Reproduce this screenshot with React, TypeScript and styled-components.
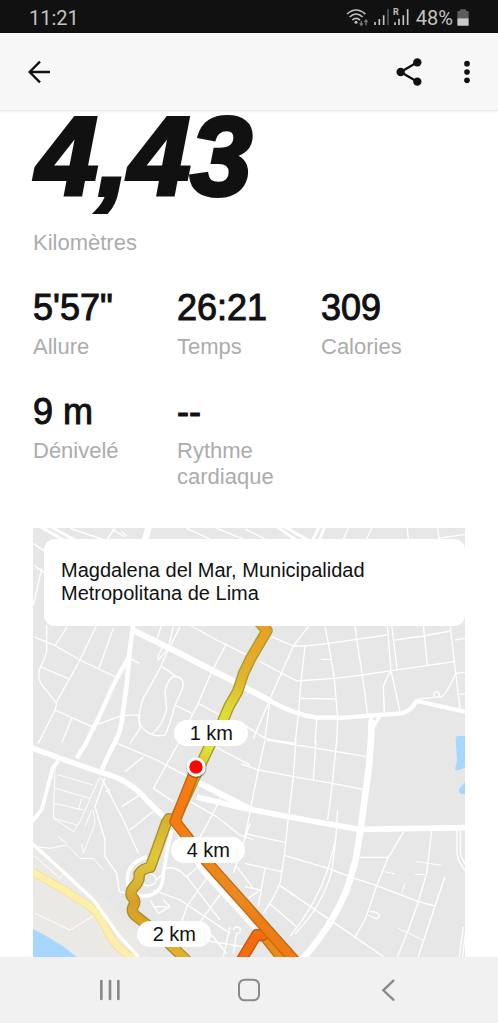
import React from "react";
import styled, { createGlobalStyle } from "styled-components";

const INK = "#111111";
const SANS = `"Liberation Sans", Arial, sans-serif`;

const GlobalStyle = createGlobalStyle`
  * { box-sizing: border-box; }
  body { margin: 0; background: #ffffff; color: ${INK}; font-family: ${SANS}; }
  button { border: 0; padding: 0; background: none; color: inherit; font: inherit; cursor: pointer; }
`;

const Screen = styled.div`
  min-height: 100vh;
  display: flex;
  flex-direction: column;
`;

const StatusBar = styled.div`
  display: flex;
  align-items: center;
  justify-content: space-between;
  height: 33px;
  padding: 2px 29px 0;
  background: #111111;
  color: #c2c2c2;
  font: 20px/30px Roboto, sans-serif;
`;

const StatusIcons = styled.div`
  display: flex;
  align-items: center;
  gap: 4px;
`;

const BatteryLevel = styled.span`
  margin-left: 3px;
`;

const AppBar = styled.header`
  position: sticky;
  top: 0;
  z-index: 2;
  display: flex;
  align-items: center;
  justify-content: space-between;
  height: 78px;
  padding: 0 15px;
  background: #f7f7f7;
  border-bottom: 1px solid #e9e9e9;
  box-shadow: 0 1px 2px rgba(0, 0, 0, 0.06);
`;

const Actions = styled.div`
  display: flex;
  gap: 10px;
  margin-right: -8px;
`;

const IconButton = styled.button`
  display: grid;
  place-items: center;
  width: 48px;
  height: 48px;
`;

const Content = styled.main`
  flex: 1;
  padding: 0 33px;
`;

const Distance = styled.div`
  margin-bottom: 27px;
  padding-left: 3px;
  font-size: 111px;
  font-weight: 700;
  font-style: italic;
  line-height: 92px;
  -webkit-text-stroke: 4px ${INK};
`;

const Label = styled.div`
  color: #acacac;
  font-size: 22px;
  line-height: 26px;
`;

const Stats = styled.div`
  display: grid;
  grid-template-columns: repeat(3, 1fr);
  gap: 32px 0;
  margin: 32px 0 38px;
`;

const Value = styled.div`
  margin-bottom: 6px;
  font-size: 36px;
  line-height: 40px;
  -webkit-text-stroke: 1px ${INK};
`;

const MapFrame = styled.section`
  position: relative;
  aspect-ratio: 432 / 429;
  overflow: hidden;
  background: #e7e7e7;
`;

const MapDrawing = styled.svg`
  display: block;
  width: 100%;
  height: 100%;
`;

const PlaceCard = styled.div`
  position: absolute;
  top: 11px;
  left: 11px;
  right: 0;
  padding: 20px 17px 21px;
  border-radius: 11px;
  background: #ffffff;
  font-size: 20px;
  line-height: 23px;
`;

/* Map drawing units, shared by the svg and the distance tags */
const MAP_WIDTH = 1296;
const MAP_HEIGHT = 1287;

const KmTag = styled.div<{ $x: number; $y: number }>`
  position: absolute;
  left: ${(p) => (p.$x / MAP_WIDTH) * 100}%;
  top: ${(p) => (p.$y / MAP_HEIGHT) * 100}%;
  transform: translate(-50%, -50%);
  width: 74px;
  border-radius: 13px;
  background: #ffffff;
  font-size: 20px;
  line-height: 26px;
  text-align: center;
`;

const SystemNav = styled.nav`
  position: sticky;
  bottom: 0;
  z-index: 2;
  display: grid;
  grid-template-columns: repeat(3, 1fr);
  height: 66px;
  padding: 0 40px;
  background: #f1f1f1;
`;

const NavButton = styled.button`
  display: grid;
  place-items: center;
`;

const stats = [
  { value: `5'57"`, label: "Allure" },
  { value: "26:21", label: "Temps" },
  { value: "309", label: "Calories" },
  { value: "9 m", label: "Dénivelé" },
  { value: "--", label: "Rythme cardiaque" },
];

const tags = [
  { text: "1 km", x: 535, y: 614 },
  { text: "4 km", x: 526, y: 967 },
  { text: "2 km", x: 424, y: 1218 },
];

const WifiIcon = () => (
  <svg width="24" height="19" viewBox="0 0 72 57" fill="none" stroke="#c2c2c2" strokeWidth="5" aria-hidden="true">
    <path d="M3 18Q30-6 58 18M11 27Q30 9 50 27M19 36Q30 26 42 36" />
    <circle cx="30" cy="43" r="4.5" fill="#c2c2c2" stroke="none" />
    <g stroke="#777777" strokeWidth="4">
      <path d="M46 38V51M41 46L46 52L51 46M60 52V37M55 42L60 36L65 42" />
    </g>
  </svg>
);

const SignalIcon = () => (
  <svg width="15" height="19" viewBox="0 0 45 57" stroke="#c2c2c2" strokeWidth="5" aria-hidden="true">
    <path d="M3 42V51M16 33V51M29 22V51" />
    <path d="M42 4V51" stroke="#555555" />
  </svg>
);

const RoamingIcon = () => (
  <svg width="16" height="19" viewBox="0 0 48 57" aria-hidden="true">
    <path d="M6 43V51M18 32V51M31 22V51M44 4V51" stroke="#c2c2c2" strokeWidth="5" />
    <text x="0" y="22" fill="#c2c2c2" fontFamily="Roboto, sans-serif" fontWeight="700" fontSize="27">R</text>
  </svg>
);

const BatteryIcon = () => (
  <svg width="12" height="17" viewBox="0 0 36 51" aria-hidden="true">
    <path d="M9 1H27V6H33Q35 6 35 8V28H1V8Q1 6 3 6H9Z" fill="#5c5c5c" />
    <path d="M1 28H35V48Q35 50 33 50H3Q1 50 1 48Z" fill="#c9c9c9" />
  </svg>
);

const BackIcon = () => (
  <svg width="24" height="24" viewBox="0 0 72 72" fill="none" stroke={INK} strokeWidth="7" aria-hidden="true">
    <path d="M69 36H8M39 5L8 36L39 67" />
  </svg>
);

const ShareIcon = () => (
  <svg width="28" height="28" viewBox="0 0 84 84" fill={INK} aria-hidden="true">
    <path d="M67 13L17 42L67 71" fill="none" stroke={INK} strokeWidth="7" />
    <circle cx="67" cy="13" r="12.5" />
    <circle cx="17" cy="42" r="12.5" />
    <circle cx="67" cy="71" r="12.5" />
  </svg>
);

const MoreIcon = () => (
  <svg width="6" height="24" viewBox="0 0 18 72" fill={INK} aria-hidden="true">
    <circle cx="9" cy="11" r="8.5" />
    <circle cx="9" cy="36" r="8.5" />
    <circle cx="9" cy="61" r="8.5" />
  </svg>
);

type RouteProps = { d: string; edge: string; fill: string };
const Route = ({ d, edge, fill }: RouteProps) => (
  <g fill="none" strokeLinejoin="round" strokeLinecap="round">
    <path d={d} stroke={edge} strokeWidth="34" />
    <path d={d} stroke={fill} strokeWidth="26" />
  </g>
);

const CityMap = () => (
  <MapDrawing viewBox={`0 0 ${MAP_WIDTH} ${MAP_HEIGHT}`} preserveAspectRatio="xMidYMid slice" role="img" aria-label="Parcours">
    <defs>
      <linearGradient id="north" gradientUnits="userSpaceOnUse" x1="700" y1="300" x2="500" y2="720">
        <stop offset="0" stopColor="#e9a023" />
        <stop offset="0.35" stopColor="#e2b32c" />
        <stop offset="0.6" stopColor="#dedc35" />
        <stop offset="0.85" stopColor="#dfe53a" />
        <stop offset="1" stopColor="#d8c12e" />
      </linearGradient>
      <linearGradient id="west" gradientUnits="userSpaceOnUse" x1="400" y1="880" x2="440" y2="1290">
        <stop offset="0" stopColor="#d9b030" />
        <stop offset="0.25" stopColor="#dfc838" />
        <stop offset="0.42" stopColor="#d9b634" />
        <stop offset="0.56" stopColor="#d99e28" />
        <stop offset="1" stopColor="#e0b32b" />
      </linearGradient>
      <linearGradient id="south" gradientUnits="userSpaceOnUse" x1="430" y1="880" x2="780" y2="1290">
        <stop offset="0" stopColor="#f57c12" />
        <stop offset="0.5" stopColor="#ea8b1d" />
        <stop offset="0.75" stopColor="#ee7c15" />
        <stop offset="1" stopColor="#f27911" />
      </linearGradient>
    </defs>

    {/* Coast, sea and lagoon */}
    <path d="M0 950L90 1035L230 1125L325 1230L350 1287H0Z" fill="#ebe9e6" />
    <path d="M0 1203L40 1224L90 1255L131 1287H0Z" fill="#a7d6ff" />
    <path d="M1276 624H1296V718Q1274 731 1266 725L1272 696L1268 632Q1268 624 1276 624Z" fill="#a7d6ff" />
    <path d="M1296 762V799Q1276 800 1278 784Z" fill="#a7d6ff" />

    <g fill="none" stroke="#ffffff" strokeWidth="4" strokeLinejoin="round">
      {/* North-west blocks */}
      <g transform="translate(-9 -9)">
        <path d="M10 55L45 80M10 120L45 145M35 130L10 240M120 10L215 42M255 10L232 42M245 12L285 36M275 20L290 32M470 10L540 42M560 10L640 42" />
        <path d="M10 335L75 362L150 405L255 455M50 300V380Q45 400 32 425Q20 450 32 475L80 535L75 555L25 655M30 425L118 462" />
        <path d="M200 300L150 405L80 530M112 305L75 362M250 310L207 430M75 555L185 605L275 572L325 570M125 580L95 655" />
        <path d="M300 400L328 415M430 305L412 380L390 430L340 520Q318 580 335 605Q360 640 405 630Q420 600 435 540L458 490Q465 460 440 455Q415 450 405 500L410 550Q400 600 365 628" />
        <path d="M410 375L385 405Q378 400 400 365M395 425L440 455M478 300L560 345L660 395M590 355L545 440L500 545L450 640M435 540L485 565M505 535L570 570M325 570L330 610L300 655" />
        <path d="M395 300L378 352M450 305L415 375" />
        <path d="M30 5L110 50M62 5L140 48" strokeWidth="9" />
        <path d="M356 5L345 50" strokeWidth="20" />
        <path d="M310 300L300 370L290 480L275 590Q270 630 240 680L215 735" strokeWidth="14" />
        <path d="M297 395L250 480L210 570L165 660L140 700" strokeWidth="13" />
      </g>
      {/* North-east blocks */}
      <g transform="translate(636 -9)">
        <path d="M310 10L295 42M380 10L365 42M487 10L490 42M578 10L582 42M580 40L660 28M0 12L60 42" />
        <path d="M80 335L145 363L180 363L250 355L335 343L425 330M450 345L535 333L615 318M630 345L660 340" />
        <path d="M190 305L145 363L80 510L25 640M240 305L250 355L268 460L278 580L275 655M180 363L168 470L160 570L150 655M330 300L335 343L352 450L368 570" />
        <path d="M45 410L155 468L268 460L352 450L440 437L628 410M427 300L438 437L465 560M440 300L456 430M438 437Q415 475 415 490L418 560M535 300L547 420M615 300L628 410L632 445L645 550" />
        <path d="M632 445L660 442M632 445Q610 500 590 515L520 522M567 514Q565 500 575 500Q585 502 583 514M645 508L660 506M165 520L272 522M228 403H256M75 525L60 640M-10 595L60 640L150 655M215 583L210 655" />
        <path d="M95 5L155 46M118 5L190 46M222 5L203 46M240 5L222 46" strokeWidth="9" />
        <path d="M378 575V600M405 572L380 615" strokeWidth="9" />
        <path d="M-36 468L0 490L70 525Q150 570 215 578H300L360 573L470 565Q495 560 515 528L660 560" strokeWidth="13" />
        <path d="M-335 316L-206 380L-36 468L80 530" strokeWidth="18" />
      </g>
      {/* South-west blocks */}
      <g transform="translate(-9 636)">
        <path d="M445 10L370 145L430 185M340 50L285 95M215 115L280 240L325 340M225 115L195 200L225 300V350L260 400L268 455L295 460M240 150L225 155M375 210L300 270M330 165L275 200M262 10L380 60L500 125" />
        <path d="M75 80L70 235L130 275L150 245L210 110M85 105L190 135M75 145L180 175M72 190L160 210M72 235L140 255M155 175L145 210M185 210L165 260M190 210L195 250L160 340L155 310" strokeWidth="3" />
        <path d="M15 320L60 325L110 315L150 355L190 355L220 390M85 290L110 310M15 520L120 570L195 525M10 345L90 415L100 400" strokeWidth="3" />
        <path d="M480 185L560 230L630 285L670 300M575 170L525 265L510 290M555 20L660 75M660 250L610 400M620 380L670 445M400 390Q430 370 470 410L570 540M470 410L515 370M540 400L470 500L455 545M580 450L500 560" />
        <path d="M370 450L450 480L600 580M360 480L385 520L420 500L400 480M375 500H410M545 585L590 640M600 560L580 650M610 570Q615 555 630 565Q635 580 620 580L610 640M350 400Q385 400 375 430Q350 445 340 430M380 420L400 400M515 600L640 620" />
        <path d="M85 62L68 85L35 210L0 252" strokeWidth="11" />
        <path d="M0 22L90 55L215 98Q300 120 350 180L420 250" strokeWidth="16" />
        <path d="M430 255L518 392L690 580" strokeWidth="16" />
        <path d="M350 350Q290 370 292 420Q295 470 350 468Q400 460 400 400L410 340L425 270" strokeWidth="11" />
        <path d="M500 125L660 207" strokeWidth="18" />
        <path d="M0 392L100 448L180 500Q210 520 235 580Q260 630 320 660" stroke="#f0dfa0" strokeWidth="25" />
        <path d="M0 392L100 448L180 500Q210 520 235 580Q260 630 320 660" stroke="#fdeeaa" strokeWidth="20" />
        <path d="M0 305L100 395L190 480L270 590L325 650" strokeWidth="10" />
      </g>
      {/* South-east blocks */}
      <g transform="translate(636 636)">
        <path d="M60 0L40 90L0 290M153 0L145 110L132 220M213 0L205 118M275 0L262 130L248 240M65 0L275 35L365 50M-10 72L40 90L145 110L262 130L355 148" />
        <path d="M278 210L272 300M130 235L118 345L105 430Q90 470 55 520M5 282L120 307M0 370L110 395M60 385L40 500M120 347L250 385L320 412L395 437L520 485L570 498M105 437L270 550L415 650M75 492L155 560M0 440L45 450L10 475" />
        <path d="M272 300L248 390Q215 490 135 590M272 300L260 395Q230 500 150 582" />
        <path d="M345 352H430M475 277L430 352L395 437L360 540L330 590M560 272L545 400L520 485L490 570L455 655M600 410L570 498L520 650M370 525L385 533Q400 540 403 528Q403 515 375 515" />
        <path d="M513 365L592 376M510 403H540M418 395L450 402M480 430L470 460M460 565L535 600" strokeWidth="3" />
        <path d="M636 270V340Q638 365 662 393M646 270V340Q648 355 662 373M655 560L642 655M662 575L652 655" />
        <path d="M380 -60L378 0L372 80L348 260L332 360L305 450Q260 560 170 660" strokeWidth="20" />
        <path d="M-145 171L-10 203L130 230L340 268L665 263" strokeWidth="17" />
      </g>
    </g>

    <Route d="M672 276L702 308L655 388L632 435L614 490L588 535L565 590L531 651L426 874" edge="#a89a2c" fill="url(#north)" />
    <Route d="M408 872L400 884L352 1018Q330 1020 318 1038Q322 1054 308 1072Q290 1088 295 1104Q312 1120 300 1136Q294 1150 306 1162L380 1220L460 1296" edge="#a58f2c" fill="url(#west)" />
    <Route d="M672 1220L696 1226L762 1310" edge="#b87418" fill="#e98a1c" />
    <Route d="M612 1318L671 1220L690 1222" edge="#c25a10" fill="#f56b10" />
    <Route d="M489 720L426 880L521 1001L640 1134L696 1198L798 1312" edge="#bd6a14" fill="url(#south)" />

    <circle cx="490" cy="720" r="31" fill="#000000" opacity="0.25" />
    <circle cx="489" cy="717" r="29" fill="#ffffff" />
    <circle cx="489" cy="717" r="20" fill="#fb0505" />
  </MapDrawing>
);

export default function App() {
  return (
    <Screen>
      <GlobalStyle />
      <StatusBar>
        <span>11:21</span>
        <StatusIcons>
          <WifiIcon />
          <SignalIcon />
          <RoamingIcon />
          <BatteryLevel>48%</BatteryLevel>
          <BatteryIcon />
        </StatusIcons>
      </StatusBar>
      <AppBar>
        <IconButton aria-label="Retour"><BackIcon /></IconButton>
        <Actions>
          <IconButton aria-label="Partager"><ShareIcon /></IconButton>
          <IconButton aria-label="Plus d'options"><MoreIcon /></IconButton>
        </Actions>
      </AppBar>
      <Content>
        <Distance>4,43</Distance>
        <Label>Kilomètres</Label>
        <Stats>
          {stats.map((s) => (
            <div key={s.label}>
              <Value>{s.value}</Value>
              <Label>{s.label}</Label>
            </div>
          ))}
        </Stats>
        <MapFrame>
          <CityMap />
          <PlaceCard>Magdalena del Mar, Municipalidad Metropolitana de Lima</PlaceCard>
          {tags.map((t) => (
            <KmTag key={t.text} $x={t.x} $y={t.y}>{t.text}</KmTag>
          ))}
        </MapFrame>
      </Content>
      <SystemNav>
        <NavButton aria-label="Applications récentes">
          <svg width="22" height="22" viewBox="0 0 66 66" stroke="#8a8a8a" strokeWidth="8" strokeLinecap="round">
            <path d="M7 6V60M33 6V60M58 6V60" />
          </svg>
        </NavButton>
        <NavButton aria-label="Accueil">
          <svg width="24" height="24" viewBox="0 0 72 72" fill="none" stroke="#8a8a8a" strokeWidth="6">
            <rect x="6" y="5" width="60" height="62" rx="17" />
          </svg>
        </NavButton>
        <NavButton aria-label="Précédent">
          <svg width="22" height="22" viewBox="0 0 66 66" fill="none" stroke="#8a8a8a" strokeWidth="7" strokeLinecap="round">
            <path d="M49 5L19 34L49 62" />
          </svg>
        </NavButton>
      </SystemNav>
    </Screen>
  );
}
